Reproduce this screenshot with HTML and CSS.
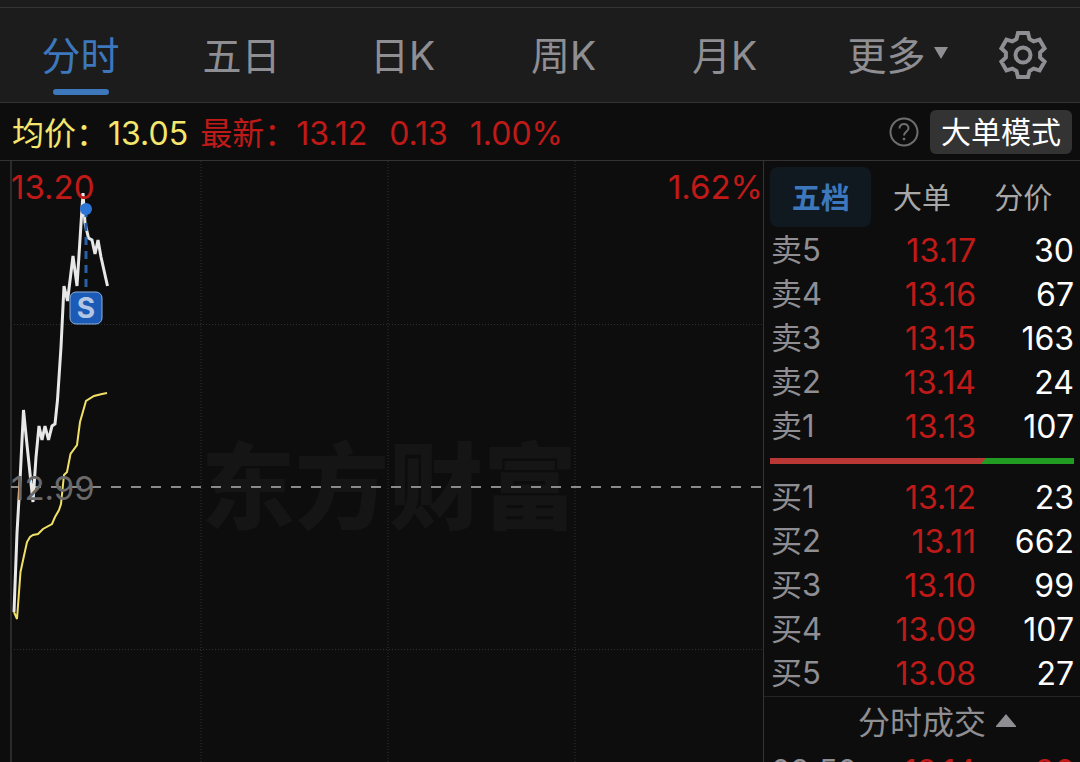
FILE: index.html
```
<!DOCTYPE html>
<html lang="zh-CN">
<head>
  <meta charset="UTF-8" />
  <meta name="viewport" content="width=device-width, initial-scale=1.0"/>
  <title>分时</title>
  <link rel="stylesheet" href="styles.css">
</head>
<body>
  <nav class="periods">
    <button class="period active">分时</button>
    <button class="period">五日</button>
    <button class="period">日K</button>
    <button class="period">周K</button>
    <button class="period">月K</button>
    <button class="period more">更多
      <svg width="14" height="12" viewBox="0 0 14 12"><path d="M0 0H14L7 12Z" fill="currentColor"/></svg>
    </button>
    <button class="settings" aria-label="设置">
      <svg width="50" height="50" viewBox="-25 -25 50 50" fill="none" stroke="currentColor" stroke-width="4">
        <path d="M-6.5 -16L-5 -22H5L6.5 -16L10.6 -13.6L16.6 -15.3L21.6 -6.7L17.1 -2.4V2.4L21.6 6.7L16.6 15.3L10.6 13.6L6.5 16L5 22H-5L-6.5 16L-10.6 13.6L-16.6 15.3L-21.6 6.7L-17.1 2.4V-2.4L-21.6 -6.7L-16.6 -15.3L-10.6 -13.6Z"/>
        <circle r="7.5"/>
      </svg>
    </button>
  </nav>

  <div class="summary">
    <div class="quote">
      <span class="avg">均价：13.05</span>
      <span class="last">最新：13.12</span>
      <span class="last">0.13</span>
      <span class="last">1.00%</span>
    </div>
    <button class="help" aria-label="帮助">
      <svg width="30" height="30" viewBox="0 0 30 30" fill="none" stroke="currentColor" stroke-width="2">
        <circle cx="15" cy="15" r="13.5"/>
        <path d="M10.500 11.500C10.500 5.500 19.500 5.500 19.500 11.200C19.500 14.500 15 14.500 15 18.500"/>
        <circle cx="15" cy="22" r="1" fill="currentColor" stroke-width="1"/>
      </svg>
    </button>
    <button class="mode">大单模式</button>
  </div>

  <main class="content">
    <section class="chart">
      <svg class="plot" viewBox="0 0 763 601" preserveAspectRatio="xMinYMin slice">
        <text class="watermark" x="201" y="361">东方财富</text>
        <g class="grid">
          <path d="M201 0V601M388 0V601M575 0V601M11 163.500H763M11 488.500H763"/>
        </g>
        <path class="axis" d="M11 0V601"/>
        <path class="base" d="M11 326H763"/>
        <polyline class="price" points="14,451 17,372 20,320 23.5,249 26.5,279 33,341 36,296 39,265 42,279 45,265 48.5,279 52,265 55,263 57.5,239 61,186 64,125 67.5,140 73,95 77,125 83,32 85,62 88.5,77 92,79 95,93 98,79 101,96 107.5,125"/>
        <polyline class="mean" points="14,451 17,458 20.5,411 23.5,397 27,381 30,376 33,374 38,373 43,368 52,363 55,356 59,349 61,343 64,314 67,311 70.5,293 77,284 80,261 86,240 94,235 102,233 107,232"/>
        <text class="label up" x="11" y="38">13.20</text>
        <text class="label up" x="763" y="38" text-anchor="end">1.62%</text>
        <text class="label flat" x="11" y="339">12.99</text>
        <path class="drop" d="M86 48V127"/>
        <circle class="dot" cx="86" cy="48" r="6"/>
        <rect class="badge" x="70" y="131" width="32" height="32" rx="6"/>
        <text class="badge-text" x="86" y="157" text-anchor="middle">S</text>
      </svg>
    </section>

    <aside class="book">
      <div class="book-tabs">
        <button class="book-tab active">五档</button>
        <button class="book-tab">大单</button>
        <button class="book-tab">分价</button>
      </div>
      <table class="levels">
        <tr><th>卖5</th><td>13.17</td><td>30</td></tr>
        <tr><th>卖4</th><td>13.16</td><td>67</td></tr>
        <tr><th>卖3</th><td>13.15</td><td>163</td></tr>
        <tr><th>卖2</th><td>13.14</td><td>24</td></tr>
        <tr><th>卖1</th><td>13.13</td><td>107</td></tr>
      </table>
      <div class="ratio">
        <div class="ratio-buy"></div>
      </div>
      <table class="levels">
        <tr><th>买1</th><td>13.12</td><td>23</td></tr>
        <tr><th>买2</th><td>13.11</td><td>662</td></tr>
        <tr><th>买3</th><td>13.10</td><td>99</td></tr>
        <tr><th>买4</th><td>13.09</td><td>107</td></tr>
        <tr><th>买5</th><td>13.08</td><td>27</td></tr>
      </table>
      <button class="trades-toggle">分时成交
        <svg width="20" height="13" viewBox="0 0 20 13"><path d="M10 0L20 12V13H0V12Z" fill="currentColor"/></svg>
      </button>
      <table class="levels trades">
        <tr><th>09:50</th><td>13.14</td><td>26</td></tr>
      </table>
    </aside>
  </main>
</body>
</html>
```
FILE: styles.css
```
* {
  box-sizing: border-box;
}
body {
  margin: 0;
  height: 100vh;
  overflow: hidden;
  display: flex;
  flex-direction: column;
  background: #0d0d0d;
  color: #8e8e93;
  font-family: Inter, "Noto Sans CJK SC", sans-serif;
}
button {
  padding: 0;
  border: none;
  background: none;
  color: inherit;
  font: inherit;
  cursor: pointer;
}
svg {
  display: block;
}

/* period tabs */
.periods {
  display: grid;
  grid-template-columns: repeat(6, 1fr) 114px;
  flex: none;
  height: 103px;
  padding-top: 7px;
  background: linear-gradient(#333, #333) 0 7px / 100% 1px no-repeat #1c1c1c;
  border-bottom: 1px solid #333;
}
.period {
  position: relative;
  padding-bottom: 4px;
  font-size: 39px;
  white-space: nowrap;
}
.period.active {
  color: #3d78bd;
}
.period.active::after {
  content: "";
  position: absolute;
  left: 50%;
  bottom: 7px;
  width: 56px;
  height: 6px;
  margin-left: -28px;
  border-radius: 3px;
  background: #3d78bd;
}
.period.more {
  display: flex;
  align-items: center;
  justify-content: center;
  gap: 8px;
  padding-left: 24px;
}
.settings {
  display: flex;
  align-items: center;
  justify-content: center;
}

/* price summary */
.summary {
  display: flex;
  flex: none;
  align-items: center;
  height: 58px;
  padding: 0 8px 0 12px;
  border-bottom: 1px solid #333;
  white-space: nowrap;
}
.quote {
  display: flex;
  align-items: baseline;
  padding-bottom: 2px;
  font-size: 32px;
}
.avg {
  margin-right: 12px;
  color: #f5e66e;
}
.last {
  margin-right: 22px;
  color: #c01a18;
}
.help {
  margin-left: auto;
  margin-right: 11px;
  color: #6e6e6e;
}
.mode {
  height: 44px;
  padding: 0 11px;
  border-radius: 6px;
  background: #333;
  color: #fff;
  font-size: 30px;
  line-height: 44px;
}

/* chart */
.content {
  display: flex;
  flex: 1;
  min-height: 0;
}
.chart {
  flex: 1;
  min-width: 0;
  overflow: hidden;
}
.plot {
  width: 100%;
  height: 100%;
}
.plot path,
.plot polyline {
  fill: none;
}
.watermark {
  fill: #151515;
  font-size: 94px;
  font-weight: 900;
}
.grid {
  stroke: #303030;
  stroke-dasharray: 1 2;
}
.axis {
  stroke: #2a2a2a;
  stroke-width: 2;
}
.base {
  stroke: #8a8a8a;
  stroke-width: 2;
  stroke-dasharray: 10 10;
}
.price {
  stroke: #e8e8e8;
  stroke-width: 3;
}
.mean {
  stroke: #f0e068;
  stroke-width: 2;
}
.label {
  font-size: 33px;
}
.up {
  fill: #c01a18;
}
.flat {
  fill: #6a6a6a;
}
.drop {
  stroke: #2860a8;
  stroke-width: 3;
  stroke-dasharray: 8 6;
}
.dot {
  fill: #2b75d6;
}
.badge {
  fill: #1b5bb5;
  stroke: #8fb0dc;
}
.badge-text {
  fill: #b4c6e4;
  font-size: 28px;
  font-weight: 700;
}

/* order book */
.book {
  flex: none;
  width: 317px;
  border-left: 1px solid #333;
}
.book-tabs {
  display: flex;
  padding: 6px 6px 2px;
}
.book-tab {
  flex: 1;
  height: 60px;
  padding-bottom: 3px;
  border-radius: 8px;
  color: #a8a8a8;
  font-size: 29px;
}
.book-tab.active {
  background: #101820;
  color: #3d78bd;
  font-weight: 700;
}
.levels {
  width: 100%;
  table-layout: fixed;
  border-collapse: collapse;
  font-size: 32px;
  line-height: 44px;
}
.levels th {
  width: 100px;
  padding: 0 0 2px 7px;
  font-size: 31px;
  font-weight: 400;
  line-height: 42px;
  text-align: left;
}
.levels tr {
  height: 44px;
}
.levels td {
  padding: 0;
  color: #c01a18;
  text-align: right;
}
.levels td:last-child {
  width: 104px;
  padding-right: 6px;
  color: #fff;
}
.ratio {
  height: 6px;
  margin: 9px 6px 12px;
  background: #229b22;
}
.ratio-buy {
  width: 71%;
  height: 6px;
  background: #b93836;
  clip-path: polygon(0 0, 100% 0, calc(100% - 5px) 100%, 0 100%);
}
.trades-toggle {
  display: flex;
  align-items: center;
  justify-content: center;
  gap: 10px;
  width: 100%;
  height: 54px;
  padding: 0 0 7px 30px;
  border-top: 1px solid #242424;
  font-size: 32px;
}
.levels.trades td:last-child {
  color: #c01a18;
}
```
